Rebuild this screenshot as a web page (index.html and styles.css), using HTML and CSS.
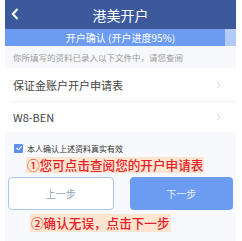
FILE: index.html
```html
<!DOCTYPE html>
<html lang="zh">
<head>
    <meta charset="UTF-8">
    <meta name="viewport" content="width=device-width, initial-scale=1.0">
    <title>港美开户</title>
    <link rel="stylesheet" href="styles.css">
</head>
<body>
    <div class="page">
        <div class="header">
            <svg class="back" width="8" height="12" viewBox="0 0 8 12"><path d="M6.5 1 L1.8 6 L6.5 11" fill="none" stroke="#fff" stroke-width="2"/></svg>
            <h1>港美开户</h1>
        </div>
        <div class="progress">
            <div class="progress-fill">开户确认 (开户进度95%)</div>
        </div>
        <div class="notice">你所填写的资料已录入以下文件中，请您查阅</div>
        <div class="list">
            <div class="row">
                <span>保证金账户开户申请表</span>
                <svg width="5" height="8" viewBox="0 0 5 8"><path d="M1 1 L4 4 L1 7" fill="none" stroke="#ccc" stroke-width="0.8"/></svg>
            </div>
            <div class="row">
                <span>W8-BEN</span>
                <svg width="5" height="8" viewBox="0 0 5 8"><path d="M1 1 L4 4 L1 7" fill="none" stroke="#ccc" stroke-width="0.8"/></svg>
            </div>
        </div>
        <div class="bottom">
            <label class="confirm">
                <span class="box"><svg width="8" height="8" viewBox="0 0 8 8"><path d="M1.5 4 L3.3 5.8 L6.6 2.2" fill="none" stroke="#fff" stroke-width="1.1"/></svg></span>
                本人确认上述资料真实有效
            </label>
            <div class="tip tip-one">①您可点击查阅您的开户申请表</div>
            <div class="buttons">
                <button type="button" class="btn btn-prev">上一步</button>
                <button type="button" class="btn btn-next">下一步</button>
            </div>
            <div class="tip tip-two">②确认无误，点击下一步</div>
        </div>
    </div>
</body>
</html>
```

FILE: styles.css
```css
body {
    margin: 0;
    padding: 0;
    background-color: #fff;
    font-family: "Noto Sans CJK SC", "Noto Sans", sans-serif;
}

.page {
    margin: 0 6px 0 5px;
    height: 241px;
    display: flex;
    flex-direction: column;
    background-color: #f8f9fc;
}

.header {
    height: 29px;
    background-color: #3c5a9b;
    display: flex;
    align-items: center;
    justify-content: center;
    position: relative;
}

.header .back {
    position: absolute;
    left: 6px;
    top: 8px;
}

.header h1 {
    margin: 0;
    color: #fff;
    font-size: 14px;
    font-weight: 400;
}

.progress {
    height: 17px;
    background-color: #b2cbfa;
}

.progress-fill {
    width: 220px;
    height: 17px;
    background-color: #6c9cf2;
    color: #fff;
    font-size: 10px;
    line-height: 17px;
    text-align: center;
    padding-left: 11px;
    box-sizing: border-box;
}

.notice {
    height: 22px;
    line-height: 22px;
    padding-left: 8px;
    font-size: 8.5px;
    color: #9a9a9a;
    background-color: #f7f8fb;
}

.list {
    background-color: #fff;
    padding-left: 8px;
}

.row {
    height: 33px;
    display: flex;
    align-items: center;
    justify-content: space-between;
    padding-right: 15px;
    font-size: 11px;
    color: #444;
    border-bottom: 1px solid #f0f0f0;
}

.row:last-child {
    border-bottom: none;
    height: 30px;
}

.bottom {
    flex: 1;
    padding-top: 11px;
}

.confirm {
    display: flex;
    align-items: center;
    height: 10px;
    margin-left: 9px;
    font-size: 8px;
    color: #333;
}

.box {
    width: 9px;
    height: 9px;
    background-color: #5d8fee;
    border-radius: 1px;
    display: flex;
    align-items: center;
    justify-content: center;
    margin-right: 4px;
}

.tip {
    width: fit-content;
    background-color: #fde6cf;
    color: #e5202a;
    font-size: 12.6px;
    font-weight: 500;
    line-height: 16px;
    padding: 0 1px;
}

.tip-one {
    margin: 4px 0 0 21px;
}

.buttons {
    display: flex;
    gap: 16px;
    padding: 4px 3px 0 3px;
}

.btn {
    flex: 1;
    height: 33px;
    border-radius: 4px;
    font-family: "Noto Sans CJK SC", sans-serif;
    font-size: 10px;
}

.btn-prev {
    background-color: #fff;
    border: 1px solid #a9c6e6;
    color: #8fa3b8;
}

.btn-next {
    background-color: #6c9cf2;
    border: none;
    color: #e6eeff;
}

.tip-two {
    margin: 4px 0 0 25px;
    line-height: 18px;
}
```
